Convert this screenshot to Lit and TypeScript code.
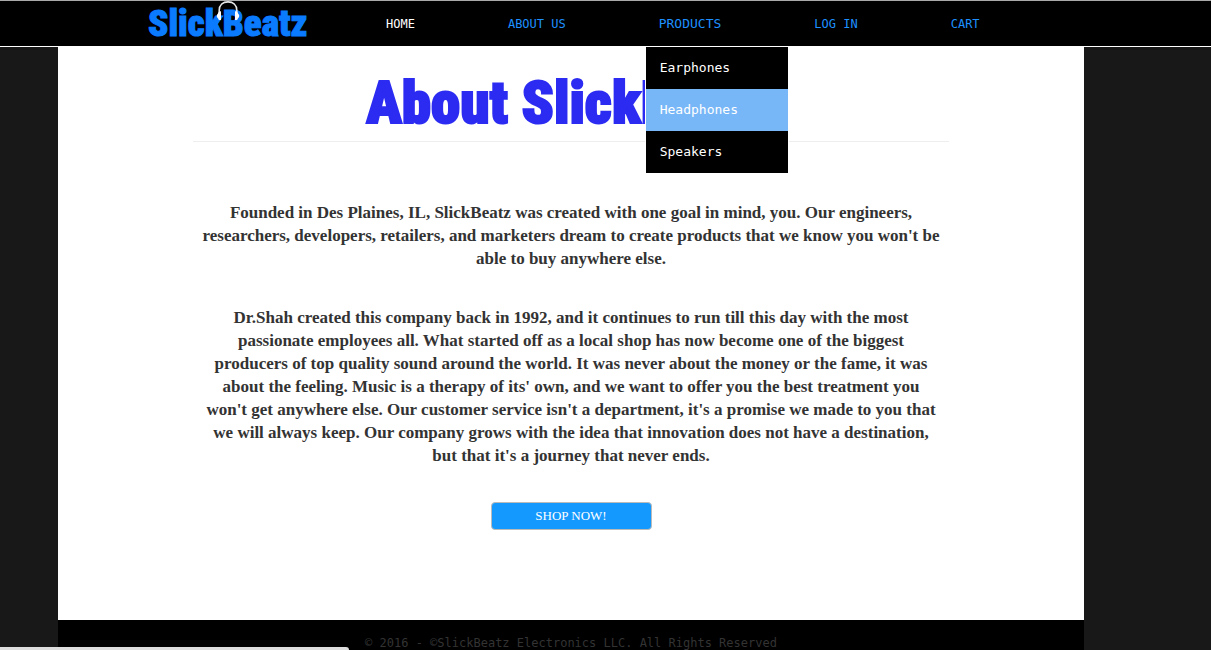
import { LitElement, html, css } from "lit";
import { customElement } from "lit/decorators.js";
import { classMap } from "lit/directives/class-map.js";

@customElement("site-logo")
class SiteLogo extends LitElement {
  static styles = css`
    :host {
      display: block;
      flex: none;
      width: 158px;
    }
    .logo {
      position: relative;
      display: block;
      color: #0a7bff;
      font: 900 37px/46px "Roboto Condensed", "Open Sans Condensed", Roboto, sans-serif;
      -webkit-text-stroke: 1px #0a7bff;
      text-decoration: none;
    }
    .phones {
      position: absolute;
      top: 0;
      left: 68px;
      width: 24px;
      height: 20px;
    }
  `;

  render() {
    return html`
      <a class="logo" href="#home">
        SlickBeatz
        <svg class="phones" viewBox="0 0 24 20" aria-hidden="true">
          <path d="M3.2 13V9.5C3.2 4 7 .9 12 .9s8.8 3.1 8.8 8.6V13" fill="none" stroke="#e8e8e8" stroke-width="1.6" />
          <path d="M5 10.2v8.800C3.300 19.500 2.400 18.700 2 17.200.4 16.300.3 13.500 1.800 12.700 2.300 11 3.400 10 5 10.200zM19 10.200v8.800c1.700.5 2.600-.3 3-1.800 1.600-.9 1.700-3.700.2-4.500-.5-1.700-1.600-2.700-3.200-2.500z" fill="#fff" />
        </svg>
      </a>
    `;
  }
}

@customElement("site-nav")
class SiteNav extends LitElement {
  static styles = css`
    :host {
      display: block;
      background: #000;
      border-top: 1px solid #a9a9a9;
      border-bottom: 1px solid #fff;
      position: relative;
      z-index: 1;
    }
    .bar {
      display: flex;
      align-items: center;
      gap: 80px;
      height: 45px;
      padding-left: 148px;
      font-family: "DejaVu Sans Mono", monospace;
    }
    .links {
      display: flex;
      align-items: center;
      gap: 93px;
      margin: 0;
      padding: 0;
      list-style: none;
    }
    .item {
      position: relative;
    }
    .link {
      display: block;
      color: #1e90ff;
      font-size: 12px;
      line-height: 46px;
      text-decoration: none;
      white-space: nowrap;
    }
    .link.current {
      color: #fff;
    }
    .link.open {
      font-size: 13px;
    }
    .menu {
      position: absolute;
      top: 45px;
      left: -14px;
      width: 142px;
      margin: 0;
      padding: 0;
      border: 1px solid #fff;
      list-style: none;
      background: #000;
    }
    .entry {
      display: block;
      padding: 0 14px;
      color: #fff;
      font-size: 13px;
      line-height: 42px;
      text-decoration: none;
    }
    .entry.hot {
      background: #78b7f7;
    }
  `;

  private links = ["HOME", "ABOUT US", "PRODUCTS", "LOG IN", "CART"];
  private products = ["Earphones", "Headphones", "Speakers"];

  render() {
    return html`
      <nav class="bar">
        <site-logo></site-logo>
        <ul class="links">
          ${this.links.map(
            (label) => html`
              <li class="item">
                <a class=${classMap({ link: true, current: label === "HOME", open: label === "PRODUCTS" })} href="#">${label}</a>
                ${label === "PRODUCTS"
                  ? html`<ul class="menu">
                      ${this.products.map(
                        (p) => html`<li><a class=${classMap({ entry: true, hot: p === "Headphones" })} href="#">${p}</a></li>`
                      )}
                    </ul>`
                  : ""}
              </li>
            `
          )}
        </ul>
      </nav>
    `;
  }
}

@customElement("app-root")
class AppRoot extends LitElement {
  static styles = css`
    :host {
      display: flex;
      flex-direction: column;
      position: relative;
      height: 100vh;
      overflow: hidden;
      background: #181818;
      font-family: "Liberation Serif", serif;
    }
    .page {
      flex: 1;
      display: flex;
      flex-direction: column;
      margin: 0 127px 0 58px;
      background: #fff;
    }
    .content {
      flex: 1;
      padding: 18px 135px 0;
      text-align: center;
    }
    .title {
      margin: 0;
      border-bottom: 1px solid #eee;
      color: #2b2bf2;
      font: 900 59px/76px "Roboto Condensed", "Open Sans Condensed", Roboto, sans-serif;
      -webkit-text-stroke: 2px #2b2bf2;
      white-space: nowrap;
    }
    .text {
      margin: 0;
      padding: 0 8px;
      color: #333;
      font-size: 17px;
      font-weight: bold;
      line-height: 23px;
    }
    .intro {
      margin-top: 59px;
    }
    .story {
      margin-top: 36px;
    }
    .shop {
      width: 161px;
      height: 28px;
      margin-top: 35px;
      padding: 0;
      border: 1px solid #bbb;
      border-radius: 4px;
      background: #1499ff;
      color: #fff;
      font: 13px/26px "Liberation Serif", serif;
    }
    .footer {
      height: 30px;
      overflow: hidden;
      background: #000;
      color: #333;
      font: 12px/46px "DejaVu Sans Mono", monospace;
      text-align: center;
      white-space: nowrap;
    }
    .status {
      position: absolute;
      left: 0;
      bottom: 0;
      width: 349px;
      height: 3px;
      border-top-right-radius: 3px;
      background: #dedede;
    }
  `;

  render() {
    return html`
      <site-nav></site-nav>
      <div class="page">
        <main class="content">
          <h1 class="title">About SlickBeatz</h1>
          <p class="text intro">
            Founded in Des Plaines, IL, SlickBeatz was created with one goal in mind, you. Our engineers, researchers,
            developers, retailers, and marketers dream to create products that we know you won't be able to buy anywhere
            else.
          </p>
          <p class="text story">
            Dr.Shah created this company back in 1992, and it continues to run till this day with the most passionate
            employees all. What started off as a local shop has now become one of the biggest producers of top quality
            sound around the world. It was never about the money or the fame, it was about the feeling. Music is a
            therapy of its' own, and we want to offer you the best treatment you won't get anywhere else. Our customer
            service isn't a department, it's a promise we made to you that we will always keep. Our company grows with
            the idea that innovation does not have a destination, but that it's a journey that never ends.
          </p>
          <button class="shop" type="button">SHOP NOW!</button>
        </main>
        <footer class="footer">© 2016 - ©SlickBeatz Electronics LLC. All Rights Reserved</footer>
      </div>
      <div class="status"></div>
    `;
  }
}
